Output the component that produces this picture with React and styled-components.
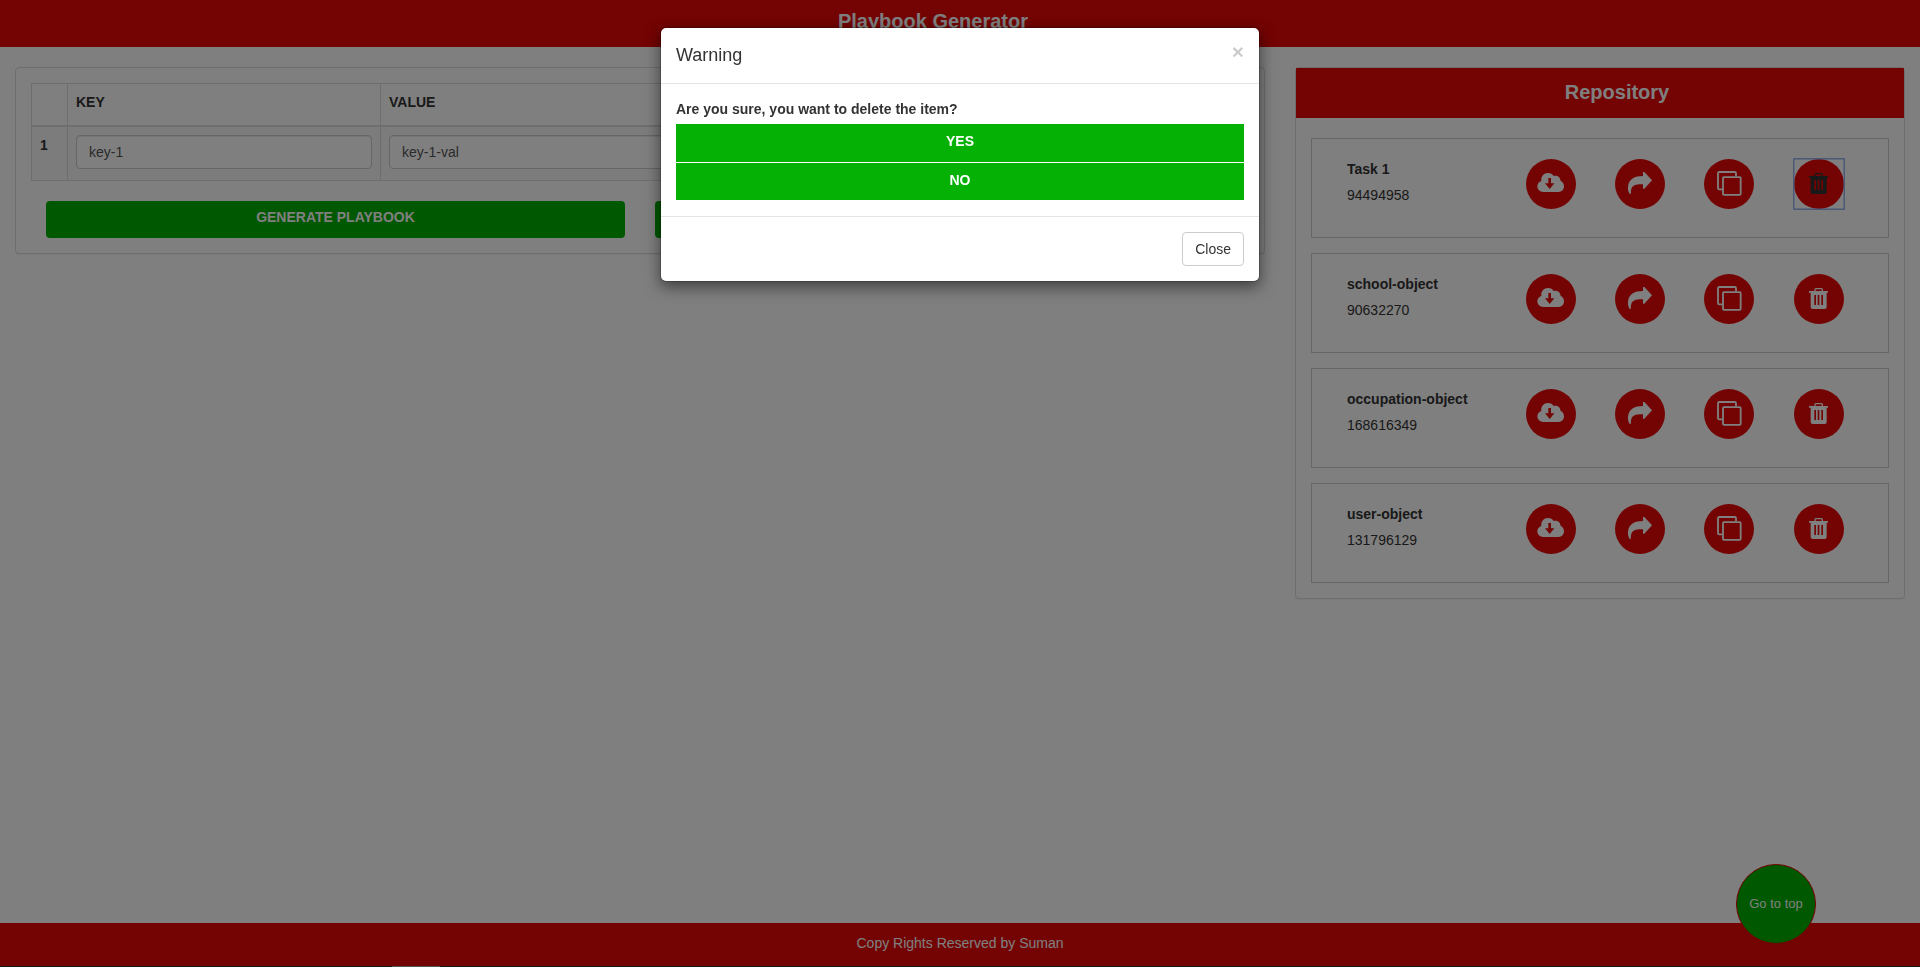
import React from "react";
import styled, { createGlobalStyle } from "styled-components";

const RED = "#e80606";
const GREEN = "#00b000";

const Global = createGlobalStyle`
  *, *::before, *::after { box-sizing: border-box; }
  body {
    margin: 0; background: #fff; color: #333; overflow: hidden;
    font: 14px/20px "Liberation Sans", Arial, sans-serif;
  }
  button { font: inherit; cursor: pointer; }
`;

const Page = styled.div`
  display: flex; flex-direction: column; height: 967px;
`;
const Header = styled.header`
  height: 47px; background: ${RED}; color: #fff; text-align: center;
  font-size: 20px; font-weight: bold; line-height: 22px; padding: 10px 54px 0 0;
`;
const Main = styled.main`
  flex: 1; display: grid; grid-template-columns: 1250px 610px; gap: 30px;
  padding: 20px 15px; align-items: start;
`;
const Panel = styled.section`
  border: 1px solid #ddd; border-radius: 4px; background: #fff;
  box-shadow: 0 1px 1px rgba(0, 0, 0, 0.05);
`;
const EditorPanel = styled(Panel)`
  padding: 15px; height: 187px;
`;
const Table = styled.table`
  width: 100%; border-collapse: collapse; table-layout: fixed; margin-bottom: 20px;
`;
const Th = styled.th`
  border: 1px solid #ddd; border-bottom-width: 2px; height: 42px; padding: 8px;
  text-align: left; vertical-align: top;
  width: ${(p) => p.$w || "auto"};
`;
const Td = styled.td`
  border: 1px solid #ddd; background: #f9f9f9; height: 55px; padding: 8px;
  vertical-align: top; font-weight: bold;
`;
const Input = styled.input`
  display: block; width: 100%; height: 34px; padding: 6px 12px; border: 1px solid #ccc;
  border-radius: 4px; background: #fff; color: #555; font: inherit; font-weight: normal;
  box-shadow: inset 0 1px 1px rgba(0, 0, 0, 0.075);
`;
const Actions = styled.div`
  display: grid; grid-template-columns: 1fr 1fr; gap: 30px; padding: 0 15px;
`;
const ActionButton = styled.button`
  height: 37px; padding: 0 0 5px; border: 0; border-radius: 4px; background: ${GREEN};
  color: #fff; font-weight: bold;
`;
const RepoHead = styled.h2`
  margin: 0; height: 50px; background: ${RED}; color: #fff; text-align: center;
  font-size: 20px; line-height: 22px; padding: 13px 0 0 34px;
`;
const RepoList = styled.div`
  display: flex; flex-direction: column; gap: 15px; padding: 20px 15px 15px;
`;
const RepoItem = styled.article`
  display: flex; height: 100px; border: 1px solid #ccc; padding: 20px 44px 0 35px;
`;
const RepoInfo = styled.div`
  width: 179px;
`;
const RepoName = styled.div`
  font-weight: bold; margin-bottom: 6px;
`;
const RoundButtons = styled.div`
  display: flex; gap: 39px;
`;
const RoundButton = styled.button`
  width: 50px; height: 50px; padding: 0; border: 0; border-radius: 50%;
  background: ${RED}; color: ${(p) => (p.$focused ? "#333" : "#fff")};
  &:last-child { margin-left: 1px; }
`;
const FocusRing = styled.span`
  display: block; margin: -1px; padding: 1px; border-radius: 1px;
  width: 52px; height: 52px; box-shadow: inset 0 0 0 1.5px #94b4ec;
`;
const Footer = styled.footer`
  height: 43px; background: ${RED}; color: #fff; text-align: center; padding-top: 10px;
`;
const BottomEdge = styled.div`
  height: 1px; background: #181818; padding-left: 392px; position: relative; z-index: 3;
`;
const EdgeMark = styled.div`
  width: 48px; height: 1px; background: #555;
`;
const TopButton = styled.button`
  position: fixed; left: 1736px; top: 864px; width: 80px; height: 80px; padding: 0 0 1px;
  border: 1px solid ${RED}; border-radius: 50%; background: ${GREEN}; color: #fff;
  font-size: 13px;
`;
const Backdrop = styled.div`
  position: fixed; inset: 0; background: rgba(0, 0, 0, 0.5); z-index: 1;
`;
const Dialog = styled.div`
  position: fixed; z-index: 2; left: 660px; top: 27px; width: 600px;
  border: 1px solid rgba(0, 0, 0, 0.2); border-radius: 6px; background: #fff;
  background-clip: padding-box; box-shadow: 0 5px 15px rgba(0, 0, 0, 0.5);
`;
const DialogHeader = styled.div`
  display: flex; justify-content: space-between; height: 56px; padding: 15px;
  border-bottom: 1px solid #e5e5e5;
`;
const DialogTitle = styled.h4`
  margin: 0; font-size: 18px; font-weight: normal; line-height: 24px;
`;
const CloseMark = styled.button`
  border: 0; padding: 0; margin-top: -2px; height: 21px; background: none; color: #000;
  opacity: 0.2; font-size: 21px; font-weight: bold; line-height: 17px;
`;
const DialogBody = styled.div`
  padding: 15px; height: 132px;
`;
const Question = styled.div`
  font-weight: bold; margin-bottom: 5px;
`;
const Choice = styled.button`
  display: block; width: 100%; height: ${(p) => p.$h}; padding: 0 0 ${(p) => p.$pb}; border: 0;
  background: #06b106; color: #fff; font-weight: bold; margin-bottom: 1px;
`;
const DialogFooter = styled.div`
  display: flex; justify-content: flex-end; padding: 15px; border-top: 1px solid #e5e5e5;
`;
const CloseButton = styled.button`
  height: 34px; padding: 6px 12px; border: 1px solid #ccc; border-radius: 4px;
  background: #fff; color: #333; line-height: 20px;
`;
const Glyph = styled.svg`
  display: block; width: 50px; height: 50px;
`;

const CloudIcon = () => (
  <Glyph viewBox="0 0 150 150">
    <path
      fill="currentColor"
      fillRule="evenodd"
      d="M52 99C42 99 34 92 34 82C34 74 39 68 46 66C44 52 54 42 66 42C74 42 80 45 83 51C91 48 103 52 104 66C110 68 114 74 114 82C114 92 107 99 98 99ZM67 57V73H57L71 90L85 73H75V57Z"
    />
  </Glyph>
);
const ShareIcon = () => (
  <Glyph viewBox="0 0 150 150">
    <path
      fill="currentColor"
      d="M84 39H88L111 64L88 89H84V76C65 75 52 79 49 90C47 96 48 101 47 105H44C40 98 38 91 39 83C41 60 59 51 84 51Z"
    />
  </Glyph>
);
const CopyIcon = () => (
  <Glyph viewBox="0 0 150 150" fill="none" stroke="currentColor" strokeWidth="5.5">
    <path d="M96 52V43Q96 39 92 39H46Q42 39 42 43V87Q42 91 46 91H55" />
    <rect x="57" y="54.5" width="53" height="53" rx="3" />
  </Glyph>
);
const TrashIcon = () => (
  <Glyph viewBox="0 0 150 150">
    <path
      fill="currentColor"
      fillRule="evenodd"
      d="M45 51H61V47Q61 42 66 42H82Q87 42 87 47V51H102V56H98V99Q98 105 92 105H56Q50 105 50 99V56H45ZM65 51H83V46H65ZM61 63V93H66V63ZM71 63V93H76V63ZM82 63V93H87V63Z"
    />
  </Glyph>
);

const items = [
  { name: "Task 1", id: "94494958", deleting: true },
  { name: "school-object", id: "90632270" },
  { name: "occupation-object", id: "168616349" },
  { name: "user-object", id: "131796129" },
];

export default function App() {
  return (
    <>
      <Global />
      <Page>
        <Header>Playbook Generator</Header>
        <Main>
          <EditorPanel>
            <Table>
              <thead>
                <tr>
                  <Th $w="36px" />
                  <Th $w="313px">KEY</Th>
                  <Th $w="313px">VALUE</Th>
                  <Th />
                </tr>
              </thead>
              <tbody>
                <tr>
                  <Td>1</Td>
                  <Td><Input defaultValue="key-1" /></Td>
                  <Td><Input defaultValue="key-1-val" /></Td>
                  <Td />
                </tr>
              </tbody>
            </Table>
            <Actions>
              <ActionButton>GENERATE PLAYBOOK</ActionButton>
              <ActionButton />
            </Actions>
          </EditorPanel>
          <Panel>
            <RepoHead>Repository</RepoHead>
            <RepoList>
              {items.map(({ name, id, deleting }) => (
                <RepoItem key={id}>
                  <RepoInfo>
                    <RepoName>{name}</RepoName>
                    <div>{id}</div>
                  </RepoInfo>
                  <RoundButtons>
                    <RoundButton><CloudIcon /></RoundButton>
                    <RoundButton><ShareIcon /></RoundButton>
                    <RoundButton><CopyIcon /></RoundButton>
                    <RoundButton $focused={deleting}>
                      {deleting ? <FocusRing><TrashIcon /></FocusRing> : <TrashIcon />}
                    </RoundButton>
                  </RoundButtons>
                </RepoItem>
              ))}
            </RepoList>
          </Panel>
        </Main>
        <Footer>Copy Rights Reserved by Suman</Footer>
        <BottomEdge><EdgeMark /></BottomEdge>
      </Page>
      <TopButton>Go to top</TopButton>
      <Backdrop />
      <Dialog>
        <DialogHeader>
          <DialogTitle>Warning</DialogTitle>
          <CloseMark>×</CloseMark>
        </DialogHeader>
        <DialogBody>
          <Question>Are you sure, you want to delete the item?</Question>
          <Choice $h="38px" $pb="4px">YES</Choice>
          <Choice $h="37px" $pb="3px">NO</Choice>
        </DialogBody>
        <DialogFooter>
          <CloseButton>Close</CloseButton>
        </DialogFooter>
      </Dialog>
    </>
  );
}
